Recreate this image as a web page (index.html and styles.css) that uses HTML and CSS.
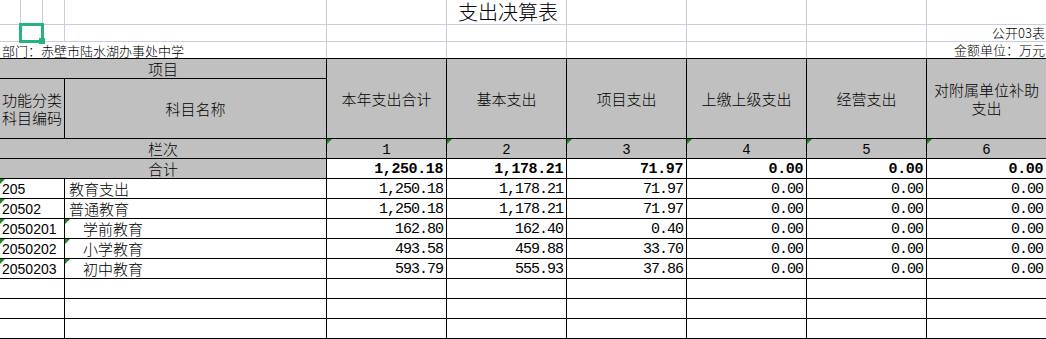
FILE: index.html
```html
<!DOCTYPE html>
<html lang="zh-CN">
<head>
<meta charset="utf-8">
<title>支出决算表</title>
<link rel="stylesheet" href="styles.css">
</head>
<body>
<div class="top">
  <div class="g"></div><div class="g"></div><div class="g"></div><div class="g"></div><div class="g"></div>
  <div class="g title">支出决算表</div>
  <div class="g"></div><div class="g"></div><div class="g"></div><div class="g"></div>

  <div class="g"></div><div class="g selcell"><div class="sel"><span class="handle"></span></div></div><div class="g"></div><div class="g"></div>
  <div class="g"></div><div class="g"></div><div class="g"></div><div class="g"></div><div class="g"></div>
  <div class="g note">公开03表</div>

  <div class="g last dept">部门：赤壁市陆水湖办事处中学</div>
  <div class="g last"></div><div class="g last"></div><div class="g last"></div><div class="g last"></div><div class="g last"></div>
  <div class="g last note">金额单位：万元</div>
</div>
<table class="sheet">
  <colgroup>
    <col class="c-code"><col class="c-name">
    <col class="c-num"><col class="c-num"><col class="c-num"><col class="c-num"><col class="c-num"><col class="c-num">
  </colgroup>
  <tr class="r-h1">
    <th colspan="2" class="hd">项目</th>
    <th rowspan="2" class="hd">本年支出合计</th>
    <th rowspan="2" class="hd">基本支出</th>
    <th rowspan="2" class="hd">项目支出</th>
    <th rowspan="2" class="hd">上缴上级支出</th>
    <th rowspan="2" class="hd">经营支出</th>
    <th rowspan="2" class="hd wrap">对附属单位补助支出</th>
  </tr>
  <tr class="r-h2">
    <th class="hd code-hd">功能分类<br>科目编码</th>
    <th class="hd">科目名称</th>
  </tr>
  <tr class="r20">
    <th colspan="2" class="hd">栏次</th>
    <th class="hd idx tri">1</th>
    <th class="hd idx tri">2</th>
    <th class="hd idx tri">3</th>
    <th class="hd idx tri">4</th>
    <th class="hd idx tri">5</th>
    <th class="hd idx tri">6</th>
  </tr>
  <tr class="r20">
    <th colspan="2" class="hd">合计</th>
    <td class="num bold">1,250.18</td>
    <td class="num bold">1,178.21</td>
    <td class="num bold">71.97</td>
    <td class="num bold">0.00</td>
    <td class="num bold">0.00</td>
    <td class="num bold">0.00</td>
  </tr>
  <tr class="r20">
    <td class="code tri">205</td>
    <td class="name">教育支出</td>
    <td class="num">1,250.18</td>
    <td class="num">1,178.21</td>
    <td class="num">71.97</td>
    <td class="num">0.00</td>
    <td class="num">0.00</td>
    <td class="num">0.00</td>
  </tr>
  <tr class="r20">
    <td class="code tri">20502</td>
    <td class="name">普通教育</td>
    <td class="num">1,250.18</td>
    <td class="num">1,178.21</td>
    <td class="num">71.97</td>
    <td class="num">0.00</td>
    <td class="num">0.00</td>
    <td class="num">0.00</td>
  </tr>
  <tr class="r20">
    <td class="code tri">2050201</td>
    <td class="name sub tri">学前教育</td>
    <td class="num">162.80</td>
    <td class="num">162.40</td>
    <td class="num">0.40</td>
    <td class="num">0.00</td>
    <td class="num">0.00</td>
    <td class="num">0.00</td>
  </tr>
  <tr class="r20">
    <td class="code tri">2050202</td>
    <td class="name sub tri">小学教育</td>
    <td class="num">493.58</td>
    <td class="num">459.88</td>
    <td class="num">33.70</td>
    <td class="num">0.00</td>
    <td class="num">0.00</td>
    <td class="num">0.00</td>
  </tr>
  <tr class="r20">
    <td class="code tri">2050203</td>
    <td class="name sub tri">初中教育</td>
    <td class="num">593.79</td>
    <td class="num">555.93</td>
    <td class="num">37.86</td>
    <td class="num">0.00</td>
    <td class="num">0.00</td>
    <td class="num">0.00</td>
  </tr>
  <tr class="r20"><td></td><td></td><td></td><td></td><td></td><td></td><td></td><td></td></tr>
  <tr class="r20"><td></td><td></td><td></td><td></td><td></td><td></td><td></td><td></td></tr>
  <tr class="r20"><td></td><td></td><td></td><td></td><td></td><td></td><td></td><td></td></tr>
</table>
</body>
</html>
```

FILE: styles.css
```css
html, body {
  margin: 0;
  padding: 0;
  background: #ffffff;
  overflow: hidden;
}
body {
  width: 1046px;
  height: 339px;
  font-family: "Noto Sans CJK SC", sans-serif;
  color: #000;
}

/* ---------- top gridline area ---------- */
.top {
  display: grid;
  grid-template-columns: 21px 22px 22px 262px repeat(6, 120px);
  grid-template-rows: 25px 17px 16px;
  width: 1047px;
}
.g {
  box-sizing: border-box;
  border-right: 1px solid #c8cee0;
  border-bottom: 1px solid #c8cee0;
  font-size: 13px;
  line-height: 16px;
  white-space: nowrap;
  overflow: visible;
}
.g.last {
  border-bottom: none;
}
.title {
  font-size: 20px;
  line-height: 24px;
  text-align: center;
  padding-left: 3px;
  font-weight: 300;
}
.note {
  text-align: right;
  padding-right: 1px;
  font-weight: 300;
}
.dept {
  grid-column: 1 / span 4;
  padding-left: 2px;
  line-height: 17px;
  font-weight: 300;
}
.selcell {
  position: relative;
}
.sel {
  position: absolute;
  left: -2px;
  top: -2px;
  width: 25px;
  height: 20px;
  box-sizing: border-box;
  border: 3px solid #25b37e;
}
.handle {
  position: absolute;
  right: -4px;
  bottom: -4px;
  width: 6px;
  height: 6px;
  background: #25b37e;
}

/* ---------- table ---------- */
.sheet {
  border-collapse: separate;
  border-spacing: 0;
  table-layout: fixed;
  width: 1047px;
  border-top: 1px solid #000;
}
.c-code { width: 65px; }
.c-name { width: 262px; }
.c-num { width: 120px; }

.sheet th, .sheet td {
  border-right: 1px solid #000;
  border-bottom: 1px solid #000;
  padding: 0;
  font-weight: 300;
  white-space: nowrap;
  overflow: hidden;
  position: relative;
}
.sheet .hd {
  background: #c0c0c0;
  font-size: 15px;
  line-height: 17px;
  text-align: center;
  vertical-align: middle;
}
.sheet .wrap {
  white-space: normal;
  line-height: 18px;
  padding: 0 1px;
}
.sheet .code-hd {
  line-height: 18px;
  padding-top: 1px;
}
.r-h1 { height: 20px; }
.r-h2 { height: 60px; }
.r20 { height: 20px; }

.sheet .idx {
  font-family: "Liberation Mono", monospace;
  font-size: 14px;
  line-height: 16px;
  padding-top: 3px;
}

.sheet .num {
  font-family: "Liberation Mono", monospace;
  font-size: 15px;
  letter-spacing: -1px;
  text-align: right;
  padding-right: 3px;
  padding-top: 2px;
  line-height: 17px;
  vertical-align: middle;
}
.sheet .num.bold {
  font-weight: 700;
  letter-spacing: -0.4px;
}
.sheet .code {
  font-family: "Liberation Sans", sans-serif;
  font-size: 14px;
  text-align: left;
  padding-left: 2px;
  padding-top: 2px;
  line-height: 17px;
}
.sheet .name {
  font-size: 15px;
  line-height: 18px;
  text-align: left;
  padding-left: 4px;
}
.sheet .name.sub {
  padding-left: 18px;
}

.tri::before {
  content: "";
  position: absolute;
  left: 0;
  top: 0;
  width: 0;
  height: 0;
  border-top: 5px solid #1c8a1c;
  border-right: 5px solid transparent;
}
```
